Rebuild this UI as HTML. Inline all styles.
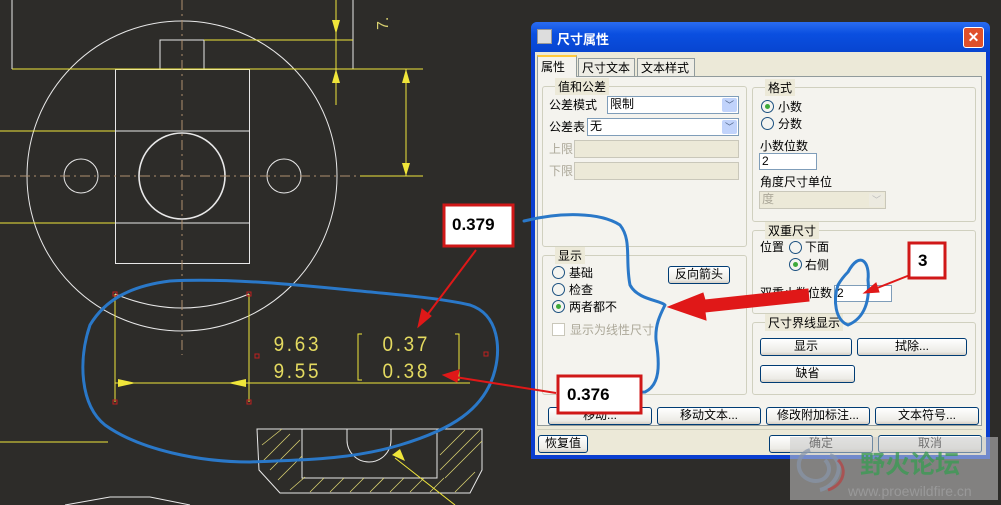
<!DOCTYPE html>
<html><head><meta charset="utf-8"><style>
*{margin:0;padding:0;box-sizing:border-box}
body{width:1001px;height:505px;overflow:hidden;background:#2d2c29;position:relative;font-family:"Liberation Sans","Noto Sans CJK SC",sans-serif;font-size:12px;color:#000}
.a{position:absolute}
#dlg{left:531px;top:22px;width:459px;height:437px;background:#0a3ed0;border-radius:6px 6px 0 0}
#title{left:0;top:0;width:459px;height:30px;background:linear-gradient(#2a6cf0,#0a4fe0 40%,#0845d0);border-radius:6px 6px 0 0;color:#fff;font-weight:bold;font-size:13px}
#body{left:4px;top:30px;width:451px;height:403px;background:#ece9d8}
.grp{position:absolute;border:1px solid #d0d0bf;border-radius:3px}
.grp>.lg{position:absolute;top:-9px;left:12px;background:#ece9d8;padding:0 3px}
.btn{position:absolute;border:1px solid #003c74;border-radius:3px;background:linear-gradient(#fff,#ecebe6 80%,#d6d0c5);text-align:center;line-height:15px;font-size:12px}
.in{position:absolute;background:#fff;border:1px solid #7f9db9;padding-left:2px;line-height:15px}
.dis{background:#ece9d8;border-color:#c9c7ba}
.sel .ar{position:absolute;right:1px;top:1px;width:15px;height:14px;background:#c1d3fb;border-radius:2px;color:#4d6185;font-size:9px;text-align:center;line-height:14px}
.rd{position:absolute;width:13px;height:13px;border:1px solid #1c5180;border-radius:50%;background:#f4f4f0}
.rd.on::after{content:"";position:absolute;left:3px;top:3px;width:5px;height:5px;border-radius:50%;background:#3ea93a}
.lbl{position:absolute;white-space:nowrap}
.g{color:#aca899}
.tab{position:absolute;border:1px solid #919b9c;border-bottom:none;line-height:16px;padding:0 3px;white-space:nowrap}
</style></head><body>
<svg class="a" style="left:0;top:0" width="1001" height="505" viewBox="0 0 1001 505">
<g fill="none" stroke="#e8e8e8" stroke-width="1">
<circle cx="182" cy="176" r="155"/>
<circle cx="81" cy="176" r="17"/><circle cx="284" cy="176" r="17"/>
<circle cx="182" cy="176" r="43" stroke-width="1.6"/>
<rect x="115.5" y="69.5" width="134" height="194"/>
<line x1="115" y1="131" x2="249" y2="131"/><line x1="115" y1="223" x2="249" y2="223"/>
<rect x="160" y="40" width="44" height="29"/>
<line x1="12" y1="0" x2="12" y2="69"/><line x1="353" y1="0" x2="353" y2="69"/>
<path d="M115 294 Q182 322 249 294"/>
<path d="M257 429 H482 V470 L470 493 H280 L259 470 Z"/>
<path d="M302 429 V478 H437 V429"/>
<path d="M347 429 V440 A22 22 0 0 0 391 440 V429"/>
<path d="M65 505 L110 497 H150 L190 505"/>
</g>
<g stroke="#d8d070" stroke-width="0.8" fill="none">
<path d="M262 445 l20 -16 M262 462 l28 -28 M270 470 l30 -30 M278 480 l24 -24 M290 490 l15 -13 M310 492 l14 -14 M330 492 l14 -14 M350 492 l14 -14 M370 492 l14 -14 M390 492 l14 -14 M410 492 l14 -14 M430 492 l14 -14 M445 478 l37 -37 M440 470 l40 -40 M440 455 l25 -25 M455 492 l20 -20"/>
</g>
<g stroke="#f0e63a" stroke-width="1" fill="none">
<line x1="12" y1="69" x2="423" y2="69"/>
<line x1="204" y1="40" x2="353" y2="40"/>
<line x1="336" y1="0" x2="336" y2="105"/>
<line x1="406" y1="69" x2="406" y2="176"/>
<line x1="360" y1="176" x2="423" y2="176"/>
<line x1="0" y1="131" x2="115" y2="131"/>
<line x1="0" y1="223" x2="115" y2="223"/>
<line x1="0" y1="442" x2="108" y2="442"/>
<line x1="115" y1="294" x2="115" y2="402"/>
<line x1="249" y1="294" x2="249" y2="402"/>
<line x1="115" y1="383" x2="470" y2="383"/>
<path d="M362 334 h-4 v46 h4 M455 334 h4 v46 h-4"/>
<line x1="395" y1="458" x2="455" y2="505"/>
</g>
<g fill="#f0e63a">
<path d="M332 20 h8 l-4 14z M332 83 h8 l-4 -14z M402 83 h8 l-4 -14z M402 163 h8 l-4 13z M118 379 v8 l18 -4z M246 379 v8 l-18 -4z"/>
<path d="M392 455 l8 -6 l5 12z"/>
</g>
<g stroke="#b09070" stroke-width="1" stroke-dasharray="10 4 2 4" fill="none">
<line x1="0" y1="176" x2="360" y2="176"/><line x1="182" y1="0" x2="182" y2="355"/>
</g>
<text x="388" y="30" fill="#d8d070" font-size="16" transform="rotate(-90 388 30)" font-family="Liberation Sans">7.</text>
<g fill="#e4da60" font-family="Liberation Sans" font-size="21" letter-spacing="3" transform="scale(0.9 1)">
<text x="304" y="351">9.63</text><text x="304" y="378">9.55</text>
<text x="425" y="351">0.37</text><text x="425" y="378">0.38</text>
</g>
<g fill="none" stroke="#c02020" stroke-width="1"><rect x="113" y="292" width="4" height="4"/><rect x="247" y="292" width="4" height="4"/><rect x="113" y="400" width="4" height="4"/><rect x="247" y="400" width="4" height="4"/><rect x="484" y="352" width="4" height="4"/><rect x="255" y="354" width="4" height="4"/></g>
</svg>

<div id="dlg" class="a">
<div id="title" class="a"><div class="a" style="left:6px;top:7px;width:15px;height:15px;background:#ddd;border:1px solid #999"></div><span class="a" style="left:26px;top:7px">尺寸属性</span>
<div class="a" style="left:432px;top:5px;width:21px;height:21px;background:#e0502a;border:1px solid #fff;border-radius:3px;color:#fff;text-align:center;line-height:19px;font-size:14px">✕</div></div>
<div id="body" class="a">
<div class="a" style="left:2px;top:24px;width:445px;height:350px;border:1px solid #919b9c;background:#f4f3ee"></div>
<div class="tab" style="left:2px;top:3px;width:40px;height:22px;border-top:2px solid #ffc83c;background:#f4f3ee;padding-top:2px">属性</div>
<div class="tab" style="left:43px;top:6px;width:57px;height:18px;background:#eeede5;padding-top:1px">尺寸文本</div>
<div class="tab" style="left:102px;top:6px;width:58px;height:18px;background:#eeede5;padding-top:1px">文本样式</div>

<div class="grp" style="left:7px;top:34px;width:205px;height:161px"><span class="lg">值和公差</span></div>
<span class="lbl" style="left:14px;top:44px">公差模式</span>
<div class="in sel" style="left:72px;top:44px;width:132px;height:18px">限制<span class="ar">﹀</span></div>
<span class="lbl" style="left:14px;top:66px">公差表</span>
<div class="in sel" style="left:52px;top:66px;width:152px;height:18px">无<span class="ar">﹀</span></div>
<span class="lbl g" style="left:14px;top:88px">上限</span>
<div class="in dis" style="left:39px;top:88px;width:165px;height:18px"></div>
<span class="lbl g" style="left:14px;top:110px">下限</span>
<div class="in dis" style="left:39px;top:110px;width:165px;height:18px"></div>

<div class="grp" style="left:7px;top:203px;width:205px;height:140px"><span class="lg">显示</span></div>
<div class="rd" style="left:17px;top:214px"></div><span class="lbl" style="left:34px;top:212px">基础</span>
<div class="rd" style="left:17px;top:231px"></div><span class="lbl" style="left:34px;top:229px">检查</span>
<div class="rd on" style="left:17px;top:248px"></div><span class="lbl" style="left:34px;top:246px">两者都不</span>
<div class="btn" style="left:133px;top:214px;width:62px;height:18px">反向箭头</div>
<div class="a" style="left:17px;top:271px;width:13px;height:13px;border:1px solid #c9c7ba;background:#fff"></div><span class="lbl g" style="left:35px;top:269px">显示为线性尺寸</span>

<div class="grp" style="left:217px;top:35px;width:224px;height:135px"><span class="lg">格式</span></div>
<div class="rd on" style="left:226px;top:48px"></div><span class="lbl" style="left:243px;top:46px">小数</span>
<div class="rd" style="left:226px;top:65px"></div><span class="lbl" style="left:243px;top:63px">分数</span>
<span class="lbl" style="left:225px;top:85px">小数位数</span>
<div class="in" style="left:224px;top:101px;width:58px;height:17px">2</div>
<span class="lbl" style="left:225px;top:121px">角度尺寸单位</span>
<div class="in dis sel g" style="left:224px;top:139px;width:127px;height:18px">度<span class="ar" style="background:#eceae0;color:#bbb">﹀</span></div>

<div class="grp" style="left:217px;top:178px;width:224px;height:84px"><span class="lg">双重尺寸</span></div>
<span class="lbl" style="left:225px;top:186px">位置</span>
<div class="rd" style="left:254px;top:189px"></div><span class="lbl" style="left:270px;top:186px">下面</span>
<div class="rd on" style="left:254px;top:206px"></div><span class="lbl" style="left:270px;top:204px">右侧</span>
<span class="lbl" style="left:225px;top:232px">双重小数位数</span>
<div class="in" style="left:299px;top:233px;width:58px;height:17px">2</div>

<div class="grp" style="left:217px;top:270px;width:224px;height:73px"><span class="lg">尺寸界线显示</span></div>
<div class="btn" style="left:225px;top:286px;width:92px;height:18px">显示</div>
<div class="btn" style="left:322px;top:286px;width:110px;height:18px">拭除...</div>
<div class="btn" style="left:225px;top:313px;width:95px;height:18px">缺省</div>

<div class="btn" style="left:13px;top:355px;width:104px;height:18px">移动...</div>
<div class="btn" style="left:122px;top:355px;width:104px;height:18px">移动文本...</div>
<div class="btn" style="left:231px;top:355px;width:104px;height:18px">修改附加标注...</div>
<div class="btn" style="left:340px;top:355px;width:104px;height:18px">文本符号...</div>
<div class="a" style="left:2px;top:377px;width:445px;height:1px;background:#d0d0bf"></div>
<div class="btn" style="left:3px;top:383px;width:50px;height:18px">恢复值</div>
<div class="btn" style="left:234px;top:383px;width:104px;height:18px">确定</div>
<div class="btn" style="left:343px;top:383px;width:104px;height:18px">取消</div>
</div>
</div>

<div class="a" style="left:790px;top:437px;width:208px;height:63px;background:rgba(200,200,200,0.55)"></div>
<svg class="a" style="left:0;top:0" width="1001" height="505" viewBox="0 0 1001 505">
<path d="M810 450 c-15 5 -15 25 0 30 c15 5 25 -10 15 -20 M830 455 c15 5 10 30 -10 35" fill="none" stroke="#8896aa" stroke-width="4" opacity="0.7"/>
<path d="M838 460 c10 10 5 25 -10 30" fill="none" stroke="#b84040" stroke-width="3" opacity="0.7"/>
<text x="860" y="473" font-size="25" font-weight="bold" fill="#3d9a55" opacity="0.8" font-family="Liberation Sans,Noto Sans CJK SC,sans-serif">野火论坛</text>
<text x="848" y="496" font-size="14" fill="#999" font-family="Liberation Sans,sans-serif">www.proewildfire.cn</text>
<g fill="none" stroke="#2a78c8" stroke-width="3" stroke-linecap="round" stroke-linejoin="round">
<path d="M170 281 C230 278 300 285 350 290 C400 295 440 298 470 305 C500 315 500 350 495 370 C485 410 450 430 400 445 C350 460 300 460 250 462 C200 462 140 450 105 425 C80 405 78 360 90 325 C105 300 130 286 170 281 Z"/>
<path d="M524 221 C560 212 600 212 620 225 C632 240 625 260 630 285 C638 300 660 300 665 305 C660 315 655 325 656 340 C660 365 660 385 645 392 L615 393"/>
<path d="M848 272 C860 250 870 262 868 280 C870 300 865 318 848 325 C835 320 833 300 838 285 C842 278 845 275 848 272"/>
</g>
<g fill="#e01818" stroke="#e01818">
<path d="M476 250 L425 318" stroke-width="2"/><path d="M418 327 l4 -18 l9 7z"/>
<path d="M556 393 L455 377" stroke-width="2"/><path d="M443 375 l16 -5 l-2 12z"/>
<path d="M910 275 L872 290" stroke-width="2"/><path d="M864 293 l12 -10 l3 9z"/>
<path d="M808 289 L705 300 L703 293 L668 307 L706 320 L705 312 L809 301 Z" stroke-width="1"/>
</g>
<g>
<rect x="444" y="205" width="69" height="41" fill="#fff" stroke="#d01818" stroke-width="3"/>
<text x="452" y="230" font-size="17" font-weight="bold" font-family="Liberation Sans">0.379</text>
<rect x="558" y="376" width="83" height="37" fill="#fff" stroke="#d01818" stroke-width="3"/>
<text x="567" y="400" font-size="17" font-weight="bold" font-family="Liberation Sans">0.376</text>
<rect x="909" y="243" width="36" height="35" fill="#fff" stroke="#d01818" stroke-width="3"/>
<text x="918" y="266" font-size="17" font-weight="bold" font-family="Liberation Sans">3</text>
</g>
</svg>
</body></html>
